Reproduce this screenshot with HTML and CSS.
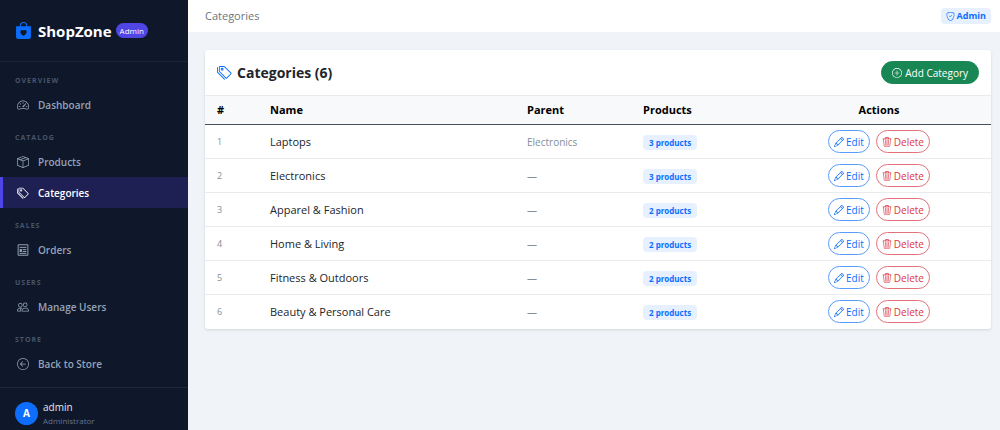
FILE: index.html
```html
<!DOCTYPE html>
<html lang="en">
<head>
	<meta charset="UTF-8">
	<meta name="viewport" content="width=device-width, initial-scale=1">
	<title>Categories - ShopZone Admin</title>
	<link rel="stylesheet" href="styles.css">
</head>
<body>
	<!-- icons -->
	<svg class="sprite" aria-hidden="true">
		<symbol id="bag" viewBox="0 0 16 16"><path fill-rule="evenodd" d="M11.5 4v-.5a3.5 3.5 0 1 0-7 0V4H1v10a2 2 0 0 0 2 2h10a2 2 0 0 0 2-2V4zM8 1a2.5 2.5 0 0 1 2.5 2.5V4h-5v-.5A2.5 2.5 0 0 1 8 1m0 6.993c1.664-1.711 5.825 1.283 0 5.132-5.825-3.85-1.664-6.843 0-5.132"/></symbol>
		<symbol id="gauge" viewBox="0 0 16 16"><path d="M8 4a.5.5 0 0 1 .5.5V6a.5.5 0 0 1-1 0V4.5A.5.5 0 0 1 8 4M3.732 5.732a.5.5 0 0 1 .707 0l.915.914a.5.5 0 1 1-.708.708l-.914-.915a.5.5 0 0 1 0-.707M2 10a.5.5 0 0 1 .5-.5h1.586a.5.5 0 0 1 0 1H2.5A.5.5 0 0 1 2 10m9.5 0a.5.5 0 0 1 .5-.5h1.5a.5.5 0 0 1 0 1H12a.5.5 0 0 1-.5-.5m.754-4.246a.39.39 0 0 0-.527-.02L7.547 9.31a.91.91 0 1 0 1.302 1.258l3.434-4.297a.39.39 0 0 0-.029-.518z"/><path fill-rule="evenodd" d="M0 10a8 8 0 1 1 15.547 2.661c-.442 1.253-1.845 1.602-2.932 1.25C11.309 13.488 9.475 13 8 13c-1.474 0-3.31.488-4.615.911-1.087.352-2.49.003-2.932-1.25A8 8 0 0 1 0 10m8-7a7 7 0 0 0-6.603 9.329c.203.575.923.876 1.68.63C4.397 12.533 6.358 12 8 12s3.604.532 4.923.96c.757.245 1.477-.056 1.68-.631A7 7 0 0 0 8 3"/></symbol>
		<symbol id="box" viewBox="0 0 16 16"><path d="M8.186 1.113a.5.5 0 0 0-.372 0L1.846 3.5l2.404.961L10.404 2zm3.564 1.426L5.596 5 8 5.961 14.154 3.5zm3.25 1.7-6.5 2.6v7.922l6.5-2.6V4.24zM7.5 14.762V6.838L1 4.239v7.923zM7.443.184a1.5 1.5 0 0 1 1.114 0l7.129 2.852A.5.5 0 0 1 16 3.5v8.662a1 1 0 0 1-.629.928l-7.185 2.874a.5.5 0 0 1-.372 0L.63 13.09a1 1 0 0 1-.63-.928V3.5a.5.5 0 0 1 .314-.464z"/></symbol>
		<symbol id="tags" viewBox="0 0 16 16"><path d="M3 2v4.586l7 7L14.586 9l-7-7zM2 2a1 1 0 0 1 1-1h4.586a1 1 0 0 1 .707.293l7 7a1 1 0 0 1 0 1.414l-4.586 4.586a1 1 0 0 1-1.414 0l-7-7A1 1 0 0 1 2 6.586z"/><path d="M5.5 5a.5.5 0 1 1 0-1 .5.5 0 0 1 0 1m0 1a1.5 1.5 0 1 0 0-3 1.5 1.5 0 0 0 0 3M1 7.086a1 1 0 0 0 .293.707L8.75 15.25l-.043.043a1 1 0 0 1-1.414 0l-7-7A1 1 0 0 1 0 7.586V3a1 1 0 0 1 1-1z"/></symbol>
		<symbol id="orders" viewBox="0 0 16 16"><path fill="none" stroke="currentColor" stroke-width="1.3" d="M1.5 1h13v14h-13zM3.5 4.5h9M7.5 7.5h5M7.5 10h5M3.5 12.5h9"/><path d="M3.5 6.7h3v4h-3z"/></symbol>
		<symbol id="people" viewBox="0 0 16 16"><path d="M15 14s1 0 1-1-1-4-5-4-5 3-5 4 1 1 1 1zm-7.978-1L7 12.996c.001-.264.167-1.03.76-1.72C8.312 10.629 9.282 10 11 10c1.717 0 2.687.63 3.24 1.276.593.69.758 1.457.76 1.72l-.008.002-.014.002zM11 7a2 2 0 1 0 0-4 2 2 0 0 0 0 4m3-2a3 3 0 1 1-6 0 3 3 0 0 1 6 0M6.936 9.28a6 6 0 0 0-1.23-.247A7 7 0 0 0 5 9c-4 0-5 3-5 4q0 1 1 1h4.216A2.24 2.24 0 0 1 5 13c0-1.01.377-2.042 1.09-2.904.243-.294.526-.569.846-.816M4.92 10A5.5 5.5 0 0 0 4 13H1c0-.26.164-1.03.76-1.724.545-.636 1.492-1.256 3.16-1.275ZM1.5 5.5a3 3 0 1 1 6 0 3 3 0 0 1-6 0m3-2a2 2 0 1 0 0 4 2 2 0 0 0 0-4"/></symbol>
		<symbol id="back" viewBox="0 0 16 16"><path fill-rule="evenodd" d="M1 8a7 7 0 1 0 14 0A7 7 0 0 0 1 8m15 0A8 8 0 1 1 0 8a8 8 0 0 1 16 0m-4.5-.5a.5.5 0 0 1 0 1H5.707l2.147 2.146a.5.5 0 0 1-.708.708l-3-3a.5.5 0 0 1 0-.708l3-3a.5.5 0 1 1 .708.708L5.707 7.5z"/></symbol>
		<symbol id="shield" viewBox="0 0 16 16"><path d="M5.338 1.59a61 61 0 0 0-2.837.856.48.48 0 0 0-.328.39c-.554 4.157.726 7.19 2.253 9.188a10.7 10.7 0 0 0 2.287 2.233c.346.244.652.42.893.533q.18.085.293.118a1 1 0 0 0 .101.025 1 1 0 0 0 .1-.025q.114-.034.294-.118c.24-.113.547-.29.893-.533a10.7 10.7 0 0 0 2.287-2.233c1.527-1.997 2.807-5.031 2.253-9.188a.48.48 0 0 0-.328-.39c-.651-.213-1.75-.56-2.837-.855C9.552 1.29 8.531 1.067 8 1.067c-.53 0-1.552.223-2.662.524zM5.072.56C6.157.265 7.31 0 8 0s1.843.265 2.928.56c1.11.3 2.229.655 2.887.87a1.54 1.54 0 0 1 1.044 1.262c.596 4.477-.787 7.795-2.465 9.99a11.8 11.8 0 0 1-2.517 2.453 7 7 0 0 1-1.048.625c-.28.132-.581.24-.829.24s-.548-.108-.829-.24a7 7 0 0 1-1.048-.625 11.8 11.8 0 0 1-2.517-2.453C1.928 10.487.545 7.169 1.141 2.692A1.54 1.54 0 0 1 2.185 1.43 63 63 0 0 1 5.072.56"/><path d="M10.854 5.146a.5.5 0 0 1 0 .708l-3 3a.5.5 0 0 1-.708 0l-1.5-1.5a.5.5 0 1 1 .708-.708L7.5 7.793l2.646-2.647a.5.5 0 0 1 .708 0"/></symbol>
		<symbol id="plus" viewBox="0 0 16 16"><path d="M8 15A7 7 0 1 1 8 1a7 7 0 0 1 0 14m0 1A8 8 0 1 0 8 0a8 8 0 0 0 0 16"/><path d="M8 4a.5.5 0 0 1 .5.5v3h3a.5.5 0 0 1 0 1h-3v3a.5.5 0 0 1-1 0v-3h-3a.5.5 0 0 1 0-1h3v-3A.5.5 0 0 1 8 4"/></symbol>
		<symbol id="pencil" viewBox="0 0 16 16"><path d="M12.146.146a.5.5 0 0 1 .708 0l3 3a.5.5 0 0 1 0 .708l-10 10a.5.5 0 0 1-.168.11l-5 2a.5.5 0 0 1-.65-.65l2-5a.5.5 0 0 1 .11-.168zM11.207 2.5 13.5 4.793 14.793 3.5 12.5 1.207zm1.586 3L10.5 3.207 4 9.707V10h.5a.5.5 0 0 1 .5.5v.5h.5a.5.5 0 0 1 .5.5v.5h.293zm-9.761 5.175-.106.106-1.528 3.821 3.821-1.528.106-.106A.5.5 0 0 1 5 12.5V12h-.5a.5.5 0 0 1-.5-.5V11h-.5a.5.5 0 0 1-.468-.325"/></symbol>
		<symbol id="trash" viewBox="0 0 16 16"><path d="M6.5 1h3a.5.5 0 0 1 .5.5v1H6v-1a.5.5 0 0 1 .5-.5M11 2.5v-1A1.5 1.5 0 0 0 9.5 0h-3A1.5 1.5 0 0 0 5 1.5v1H1.5a.5.5 0 0 0 0 1h.538l.853 10.66A2 2 0 0 0 4.885 16h6.23a2 2 0 0 0 1.994-1.84l.853-10.66h.538a.5.5 0 0 0 0-1zm1.958 1-.846 10.58a1 1 0 0 1-.997.92h-6.23a1 1 0 0 1-.997-.92L3.042 3.5z"/><path fill="none" stroke="currentColor" stroke-linecap="round" d="M5.5 5l.5 8.500M8 5v8.500M10.500 5l-.5 8.500"/></symbol>
	</svg>

	<div class="layout">
		<aside class="sidebar">
			<div class="brand">
				<svg class="icon brand-icon"><use href="#bag"/></svg>
				<span class="brand-name">ShopZone</span>
				<span class="brand-badge">Admin</span>
			</div>
			<nav class="nav">
				<div class="nav-label">OVERVIEW</div>
				<a class="nav-link" href="#"><svg class="icon"><use href="#gauge"/></svg>Dashboard</a>
				<div class="nav-label">CATALOG</div>
				<a class="nav-link" href="#"><svg class="icon"><use href="#box"/></svg>Products</a>
				<a class="nav-link active" href="#"><svg class="icon"><use href="#tags"/></svg>Categories</a>
				<div class="nav-label">SALES</div>
				<a class="nav-link" href="#"><svg class="icon"><use href="#orders"/></svg>Orders</a>
				<div class="nav-label">USERS</div>
				<a class="nav-link" href="#"><svg class="icon"><use href="#people"/></svg>Manage Users</a>
				<div class="nav-label">STORE</div>
				<a class="nav-link" href="#"><svg class="icon"><use href="#back"/></svg>Back to Store</a>
			</nav>
			<div class="user">
				<div class="avatar">A</div>
				<div>
					<div class="user-name">admin</div>
					<div class="user-role">Administrator</div>
				</div>
			</div>
		</aside>

		<div class="main">
			<header class="topbar">
				<span>Categories</span>
				<span class="role"><svg class="icon"><use href="#shield"/></svg>Admin</span>
			</header>
			<main class="content">
				<section class="card">
					<div class="card-header">
						<h1><svg class="icon"><use href="#tags"/></svg>Categories (6)</h1>
						<button class="btn btn-add" type="button"><svg class="icon"><use href="#plus"/></svg>Add Category</button>
					</div>
					<table>
						<thead>
							<tr>
								<th class="col-id">#</th>
								<th>Name</th>
								<th class="col-parent">Parent</th>
								<th class="col-products">Products</th>
								<th class="col-actions">Actions</th>
							</tr>
						</thead>
						<tbody>
							<tr>
								<td class="num">1</td><td>Laptops</td><td class="parent">Electronics</td>
								<td><span class="count">3 products</span></td>
								<td class="actions"><button class="btn btn-edit" type="button"><svg class="icon"><use href="#pencil"/></svg>Edit</button><button class="btn btn-delete" type="button"><svg class="icon"><use href="#trash"/></svg>Delete</button></td>
							</tr>
							<tr>
								<td class="num">2</td><td>Electronics</td><td class="parent">—</td>
								<td><span class="count">3 products</span></td>
								<td class="actions"><button class="btn btn-edit" type="button"><svg class="icon"><use href="#pencil"/></svg>Edit</button><button class="btn btn-delete" type="button"><svg class="icon"><use href="#trash"/></svg>Delete</button></td>
							</tr>
							<tr>
								<td class="num">3</td><td>Apparel &amp; Fashion</td><td class="parent">—</td>
								<td><span class="count">2 products</span></td>
								<td class="actions"><button class="btn btn-edit" type="button"><svg class="icon"><use href="#pencil"/></svg>Edit</button><button class="btn btn-delete" type="button"><svg class="icon"><use href="#trash"/></svg>Delete</button></td>
							</tr>
							<tr>
								<td class="num">4</td><td>Home &amp; Living</td><td class="parent">—</td>
								<td><span class="count">2 products</span></td>
								<td class="actions"><button class="btn btn-edit" type="button"><svg class="icon"><use href="#pencil"/></svg>Edit</button><button class="btn btn-delete" type="button"><svg class="icon"><use href="#trash"/></svg>Delete</button></td>
							</tr>
							<tr>
								<td class="num">5</td><td>Fitness &amp; Outdoors</td><td class="parent">—</td>
								<td><span class="count">2 products</span></td>
								<td class="actions"><button class="btn btn-edit" type="button"><svg class="icon"><use href="#pencil"/></svg>Edit</button><button class="btn btn-delete" type="button"><svg class="icon"><use href="#trash"/></svg>Delete</button></td>
							</tr>
							<tr>
								<td class="num">6</td><td>Beauty &amp; Personal Care</td><td class="parent">—</td>
								<td><span class="count">2 products</span></td>
								<td class="actions"><button class="btn btn-edit" type="button"><svg class="icon"><use href="#pencil"/></svg>Edit</button><button class="btn btn-delete" type="button"><svg class="icon"><use href="#trash"/></svg>Delete</button></td>
							</tr>
						</tbody>
					</table>
				</section>
			</main>
		</div>
	</div>
</body>
</html>
```

FILE: styles.css
```css
*
{
	box-sizing: border-box;
}

body
{
	margin: 0;
	font-family: "Open Sans", "Noto Sans", sans-serif;
	font-size: 11px;
	line-height: 16px;
	color: #212529;
	background: #f0f4f8;
}

.sprite
{
	display: none;
}

.icon
{
	width: 12px;
	height: 12px;
	flex: none;
	fill: currentColor;
}

.layout
{
	display: flex;
	min-height: 100vh;
}

/* sidebar */
.sidebar
{
	display: flex;
	flex-direction: column;
	width: 188px;
	flex: none;
	background: #0f172a;
}

.brand
{
	display: flex;
	align-items: center;
	height: 62px;
	padding: 0 15px;
	border-bottom: 1px solid #1a2336;
}

.brand-icon
{
	width: 17px;
	height: 17px;
	margin-right: 6px;
	color: #0d6efd;
}

.brand-name
{
	font-size: 15px;
	font-weight: 700;
	color: #fff;
}

.brand-badge
{
	margin-left: 4px;
	padding: 0 4px;
	border-radius: 8px;
	font-size: 8px;
	line-height: 15px;
	color: #fff;
	background: #4f46e5;
}

.nav
{
	flex: 1;
	padding: 1px 0 8px;
}

.nav-label
{
	padding: 13px 15px 3px;
	font-size: 7px;
	line-height: 10px;
	font-weight: 700;
	letter-spacing: 1px;
	color: #475569;
}

.nav-link
{
	display: flex;
	align-items: center;
	gap: 9px;
	height: 31px;
	padding: 0 14px;
	border-left: 3px solid transparent;
	font-size: 10px;
	font-weight: 600;
	color: #94a3b8;
	text-decoration: none;
}

.nav-link.active
{
	border-left-color: #4f46e5;
	color: #fff;
	background: #1e1f52;
}

.user
{
	display: flex;
	align-items: center;
	gap: 5px;
	height: 43px;
	padding: 8px 15px 0;
	border-top: 1px solid #1e293b;
}

.avatar
{
	width: 23px;
	height: 23px;
	border-radius: 50%;
	font-weight: 700;
	font-size: 10px;
	line-height: 23px;
	text-align: center;
	color: #fff;
	background: #0d6efd;
}

.user-name
{
	font-size: 10px;
	line-height: 14px;
	color: #e2e8f0;
}

.user-role
{
	font-size: 8px;
	line-height: 13px;
	color: #64748b;
}

/* page */
.main
{
	flex: 1;
	min-width: 0;
}

.topbar
{
	display: flex;
	justify-content: space-between;
	align-items: center;
	height: 32px;
	padding: 0 9px 0 17px;
	color: #6c757d;
	background: #fff;
}

.role
{
	display: flex;
	align-items: center;
	gap: 2px;
	padding: 0 5px;
	border-radius: 4px;
	font-size: 9px;
	font-weight: 700;
	color: #0d6efd;
	background: #e7f0ff;
}

.role .icon
{
	width: 9px;
	height: 9px;
}

.content
{
	padding: 18px 9px 18px 17px;
}

.card
{
	border-radius: 3px;
	background: #fff;
	box-shadow: 0 1px 3px rgba(0, 0, 0, .12);
}

.card-header
{
	display: flex;
	justify-content: space-between;
	align-items: center;
	height: 45px;
	padding: 0 12px;
}

h1
{
	display: flex;
	align-items: center;
	gap: 5px;
	margin: 0;
	font-size: 14px;
	font-weight: 700;
}

h1 .icon
{
	width: 15px;
	height: 15px;
	color: #0d6efd;
}

.btn
{
	display: inline-flex;
	align-items: center;
	gap: 2px;
	height: 23px;
	padding: 0 5px;
	border: 1px solid;
	border-radius: 12px;
	font: 10px/16px "Open Sans", "Noto Sans", sans-serif;
	background: none;
}

.btn .icon
{
	width: 10px;
	height: 10px;
}

.btn-add
{
	gap: 3px;
	padding: 0 10px;
	border-color: #198754;
	color: #fff;
	background: #198754;
}

.btn-edit
{
	margin-right: 6px;
	border-color: #5a9bfe;
	color: #0d6efd;
}

.btn-delete
{
	border-color: #e4707c;
	color: #dc3545;
}

table
{
	width: 100%;
	table-layout: fixed;
	border-collapse: collapse;
}

th, td
{
	padding: 0 12px;
	text-align: left;
}

th
{
	height: 29px;
	border-top: 1px solid #e9ecef;
	border-bottom: 1px solid #495057;
	font-weight: 700;
	font-size: 11px;
	color: #000;
	background: #f8f9fa;
}

td
{
	height: 34px;
	border-bottom: 1px solid #e9ecef;
}

tr:last-child td
{
	border-bottom: none;
}

.col-id
{
	width: 53px;
}

.col-parent
{
	width: 116px;
}

.col-products
{
	width: 136px;
}

.col-actions
{
	width: 224px;
	text-align: center;
}

.actions
{
	text-align: center;
}

.num
{
	font-size: 9px;
	color: #868e96;
}

.parent
{
	font-size: 10px;
	color: #868e96;
}

.count
{
	display: inline-block;
	padding: 0 6px;
	border-radius: 4px;
	font-size: 8px;
	line-height: 15px;
	font-weight: 700;
	color: #0d6efd;
	background: #e7f0ff;
}
```
